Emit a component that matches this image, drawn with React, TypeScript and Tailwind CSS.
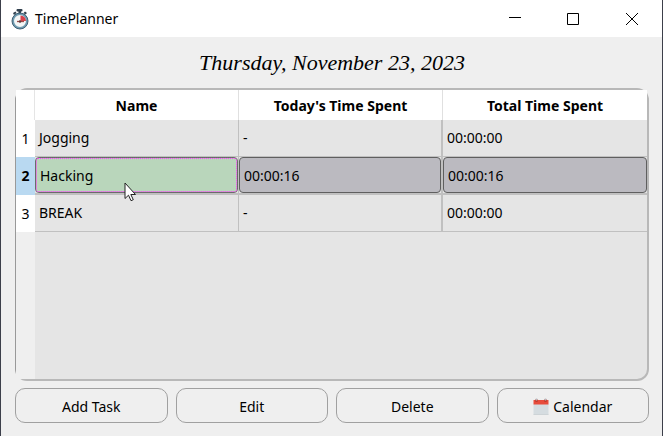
const tasks = [
  { id: 1, name: "Jogging", today: "-", total: "00:00:00" },
  { id: 2, name: "Hacking", today: "00:00:16", total: "00:00:16" },
  { id: 3, name: "BREAK", today: "-", total: "00:00:00" },
];

const selectedId = 2;

function StopwatchIcon() {
  return (
    <svg width="20" height="22" viewBox="0 0 20 22" aria-hidden="true">
      <rect x="6.500" y="1" width="6" height="2.500" rx="1" fill="#2f3f4d" />
      <rect x="8.500" y="3" width="2.500" height="3" fill="#2f3f4d" />
      <path d="M3 5l2.500-1.500 1 1.500-2.500 2zM15 3.500l2 1.500-1.500 1.500-2-1.500z" fill="#2f3f4d" />
      <circle cx="10" cy="13" r="7" fill="#f4f6f6" stroke="#6f9bb0" strokeWidth="2" />
      <circle cx="10" cy="13" r="8" fill="none" stroke="#34536a" strokeWidth="0.900" />
      <path d="M10.500 13V7.500a5.500 5.500 0 0 1 5.500 5.500z" fill="#d9414b" />
      <path d="M7 13.500h7" stroke="#9c4a48" strokeWidth="1.300" />
      <circle cx="10" cy="13.500" r="1.200" fill="#5c3a3c" />
    </svg>
  );
}

function CalendarIcon() {
  return (
    <svg width="16" height="18" viewBox="0 0 16 18" aria-hidden="true">
      <path d="M0.500 6h15v10.500h-15z" fill="#d5dce0" />
      <path d="M0.500 2h15v4.500h-15z" fill="#e74c3c" />
      <circle cx="3.500" cy="2.500" r="1.500" fill="#c0392b" />
      <circle cx="12.500" cy="2.500" r="1.500" fill="#c0392b" />
      <path d="M3.500 0.500v2M12.500 0.500v2" stroke="#b4bcc1" strokeWidth="1.500" />
      <path d="M0.500 16.500h15" stroke="#cdd3d6" />
    </svg>
  );
}

function Cursor() {
  return (
    <svg className="absolute left-[89px] top-[25px] z-10" width="13" height="20" viewBox="0 0 13 20" aria-hidden="true">
      <path d="M1 1v15.500l3.500-3.300 2.500 5.500 2.300-1-2.500-5.200H11.500z" fill="#fff" stroke="#222" />
    </svg>
  );
}

function TitleBar() {
  return (
    <header className="flex h-[37px] items-center bg-white pl-[9px]">
      <StopwatchIcon />
      <span className="ml-[5px] flex-1">TimePlanner</span>
      <button type="button" aria-label="Minimize" className="flex h-full w-[58px] items-center justify-center">
        <svg width="12" height="12" viewBox="0 0 12 12"><path d="M0 4.500h12" stroke="#000" /></svg>
      </button>
      <button type="button" aria-label="Maximize" className="flex h-full w-[58px] items-center justify-center">
        <svg width="12" height="12" viewBox="0 0 12 12"><path d="M0.500 0.500h11v11h-11z" fill="none" stroke="#000" /></svg>
      </button>
      <button type="button" aria-label="Close" className="flex h-full w-[60px] items-center justify-center">
        <svg width="12" height="12" viewBox="0 0 12 12"><path d="M0 0l12 12M12 0L0 12" stroke="#000" /></svg>
      </button>
    </header>
  );
}

function TaskTable() {
  return (
    <div className="flex flex-1 flex-col rounded-[12px] border-2 border-l border-[#b8b8b8] border-l-[#999] bg-[#e5e5e5]">
      <table className="w-full table-fixed border-separate border-spacing-0 text-left">
        <colgroup>
          <col className="w-[19px]" />
          <col />
          <col />
          <col />
        </colgroup>
        <thead>
          <tr className="h-[30px] bg-white text-center font-bold">
            <td className="border-r border-[#e5e5e5] p-0" />
            <th scope="col" className="border-r border-[#e0e0e0] px-0 pb-0 pt-[2px]">Name</th>
            <th scope="col" className="border-r border-[#e0e0e0] px-0 pb-0 pt-[2px]">Today's Time Spent</th>
            <th scope="col" className="px-0 pb-0 pt-[2px]">Total Time Spent</th>
          </tr>
        </thead>
        <tbody>
          {tasks.map((task) =>
            task.id === selectedId ? (
              <tr key={task.id} className="h-[38px]">
                <th scope="row" className="bg-[#b9d9f1] p-0 text-center font-bold">{task.id}</th>
                <td className="relative border-b-2 border-r border-[#c0c0c0] p-0">
                  <div className="flex h-[36px] items-center rounded-[4px] border border-[#6b6b6b] bg-[#b9d6bb]">
                    <span className="flex h-full flex-1 items-center rounded-[2px] border border-dotted border-[#ff3cff] pl-[3px] pt-[2px]">{task.name}</span>
                  </div>
                  <Cursor />
                </td>
                <td className="border-b-2 border-r-2 border-[#c0c0c0] p-0">
                  <div className="flex h-[36px] items-center rounded-[4px] border border-[#5f5f5f] bg-[#bbbac0] pl-[4px] pt-[2px]">{task.today}</div>
                </td>
                <td className="border-b-2 border-[#c0c0c0] p-0">
                  <div className="flex h-[36px] items-center rounded-[4px] border border-[#5f5f5f] bg-[#bbbac0] pl-[4px] pt-[2px]">{task.total}</div>
                </td>
              </tr>
            ) : (
              <tr key={task.id} className="h-[37px]">
                <th scope="row" className="bg-white p-0 text-center font-normal">{task.id}</th>
                <td className="border-b border-r border-[#c0c0c0] py-0 pl-[4px] pr-0">{task.name}</td>
                <td className="border-b border-r-2 border-[#c0c0c0] py-0 pl-[4px] pr-0">{task.today}</td>
                <td className="border-b border-[#c0c0c0] py-0 pl-[4px] pr-0">{task.total}</td>
              </tr>
            ),
          )}
        </tbody>
      </table>
      <div className="w-[19px] flex-1 bg-[#efefef]" />
    </div>
  );
}

const actionClass =
  "flex h-[35px] items-center justify-center gap-[4px] rounded-[10px] border border-[#a0a0a0] bg-[#efefef] pt-[2px]";

export default function App() {
  return (
    <div className="flex min-h-screen flex-col border-x border-[#3c3f4a] bg-[#efefef] font-['Noto_Sans',sans-serif] text-[14px] leading-[20px] text-black">
      <TitleBar />
      <main className="flex flex-1 flex-col pb-[13px] pl-[14px] pr-[13px]">
        <h1 className="flex h-[51px] items-center justify-center font-['Liberation_Serif',serif] text-[22px] italic leading-[32px]">
          Thursday, November 23, 2023
        </h1>
        <TaskTable />
        <div className="mt-[7px] grid grid-cols-4 gap-2">
          <button type="button" className={actionClass}>Add Task</button>
          <button type="button" className={actionClass}>Edit</button>
          <button type="button" className={actionClass}>Delete</button>
          <button type="button" className={actionClass}>
            <CalendarIcon />
            Calendar
          </button>
        </div>
      </main>
    </div>
  );
}
